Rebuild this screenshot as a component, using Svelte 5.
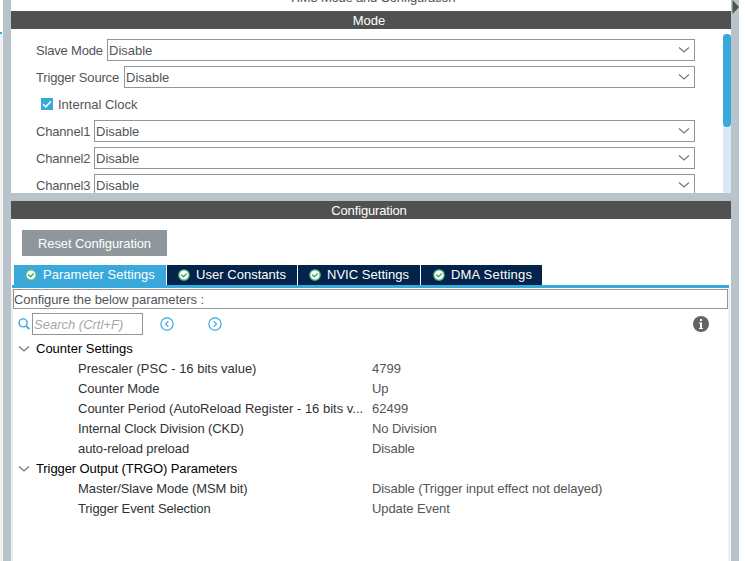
<script>
  const modes = [
    { label: 'Slave Mode', labelWidth: 71, value: 'Disable' },
    { label: 'Trigger Source', labelWidth: 88, value: 'Disable' },
    { label: 'Internal Clock', check: true },
    { label: 'Channel1', labelWidth: 58, value: 'Disable' },
    { label: 'Channel2', labelWidth: 58, value: 'Disable' },
    { label: 'Channel3', labelWidth: 58, value: 'Disable' },
  ];
  const tabs = [
    { name: 'Parameter Settings', width: 152 },
    { name: 'User Constants', width: 130 },
    { name: 'NVIC Settings', width: 122 },
    { name: 'DMA Settings', width: 121, wide: true },
  ];
  const groups = [
    {
      name: 'Counter Settings',
      rows: [
        { name: 'Prescaler (PSC - 16 bits value)', value: '4799' },
        { name: 'Counter Mode', value: 'Up', tight: true },
        { name: 'Counter Period (AutoReload Register - 16 bits v...', value: '62499' },
        { name: 'Internal Clock Division (CKD)', value: 'No Division', tight: true },
        { name: 'auto-reload preload', value: 'Disable', tight: true },
      ],
    },
    {
      name: 'Trigger Output (TRGO) Parameters',
      tight: true,
      rows: [
        { name: 'Master/Slave Mode (MSM bit)', value: 'Disable (Trigger input effect not delayed)', tight: true },
        { name: 'Trigger Event Selection', value: 'Update Event', tight: true },
      ],
    },
  ];
</script>

{#snippet chevron()}
  <svg class="chevron" width="12" height="8" viewBox="0 0 12 8"><path d="M1 1.5 L6 6 L11 1.5" /></svg>
{/snippet}

<div class="window">
  <div class="outer-left"><i></i></div>
  <div class="rail"></div>
  <main>
    <section class="mode">
      <div class="title"><span>TIM3 Mode and Configuration</span></div>
      <h2 class="mode-title">Mode</h2>
      <div class="mode-body">
        <div class="fields">
          {#each modes as m}
            <div class="field">
              {#if m.check}
                <svg class="check" width="12" height="12" viewBox="0 0 12 12">
                  <rect width="12" height="12" fill="#39a9dc" />
                  <path d="M2.2 6.2 L4.8 8.8 L9.8 3.4" fill="none" stroke="#fff" stroke-width="1.5" />
                </svg>
                <span class="text">{m.label}</span>
              {:else}
                <span class="label text" style="width: {m.labelWidth}px">{m.label}</span>
                <div class="select"><span class="text">{m.value}</span>{@render chevron()}</div>
              {/if}
            </div>
          {/each}
        </div>
        <div class="scroll"><div class="thumb"></div></div>
      </div>
    </section>
    <div class="splitter"></div>
    <section class="config">
      <h2>Configuration</h2>
      <button class="reset">Reset Configuration</button>
      <nav>
        {#each tabs as t, i}
          <div class="tab" class:active={i === 0} class:wide={t.wide} style="width: {t.width}px">
            <svg width="12" height="12" viewBox="0 0 12 12">
              <circle cx="6" cy="6" r="5.2" fill="#fff" stroke="#4fb87c" stroke-width="1.3" />
              <path d="M3.2 5.6 L5.4 7.8 L8.8 4.4" fill="none" stroke="#3da866" stroke-width="1.4" />
            </svg>
            <span>{t.name}</span>
          </div>
        {/each}
      </nav>
      <div class="line"></div>
      <div class="panel">
        <div class="hint">Configure the below parameters :</div>
        <div class="tools">
          <svg class="mag" width="12" height="12" viewBox="0 0 12 12">
            <circle cx="5.1" cy="4.9" r="4" /><path d="M8 7.8 L11.4 11.2" stroke-width="1.8" />
          </svg>
          <div class="search">Search (Crtl+F)</div>
          <svg class="nav" width="14" height="14" viewBox="0 0 14 14"><circle cx="7" cy="7" r="6.1" /><path d="M8.4 4.2 L5.6 7 L8.4 9.8" /></svg>
          <svg class="nav next" width="14" height="14" viewBox="0 0 14 14"><circle cx="7" cy="7" r="6.1" /><path d="M5.6 4.2 L8.4 7 L5.6 9.8" /></svg>
          <svg class="info" width="16" height="16" viewBox="0 0 16 16">
            <circle cx="8" cy="8" r="8" fill="#646464" />
            <path d="M7 3h2v2H7z M6 6.4h3V12h1v1H6v-1h1V7.4H6z" fill="#fff" />
          </svg>
        </div>
        <div class="tree">
          {#each groups as g}
            <div class="group" class:tight={g.tight}>{@render chevron()}<span>{g.name}</span></div>
            {#each g.rows as r}
              <div class="row" class:tight={r.tight}><span class="name">{r.name}</span><span class="value">{r.value}</span></div>
            {/each}
          {/each}
        </div>
      </div>
    </section>
  </main>
  <div class="rail right">
    <svg width="7" height="14" viewBox="0 0 7 14"><path d="M0.5 0 L7 7 L0.5 14z" fill="#4f5250" /></svg>
  </div>
</div>

<style>
  :global(body) { margin: 0; background: #fff; overflow: hidden; }
  .window {
    display: flex; width: 745px; height: 561px; overflow: hidden; background: #fff;
    font: 13px/20px "Liberation Sans", Arial, sans-serif; color: #535557; white-space: nowrap;
  }
  svg { display: block; flex: none; }
  .outer-left { width: 3px; padding-top: 32px; display: flex; flex-direction: column; background: linear-gradient(#fff 34px, #f0f1f1 34px); box-sizing: border-box; }
  .outer-left i { width: 2px; height: 2px; background: #39a9dc; }
  .rail { width: 8px; background: #b8c4ca; flex: none; }
  .right svg { margin-left: 1px; }
  main { width: 720px; display: flex; flex-direction: column; }
  .mode { height: 193px; overflow: hidden; display: flex; flex-direction: column; flex: none; }
  .title { height: 11px; display: flex; align-items: flex-end; justify-content: center; flex: none; overflow: hidden; padding-left: 2px; }
  .title span { line-height: 20px; margin-bottom: 3px; letter-spacing: -0.2px; }
  h2 { margin: 0; height: 18px; box-sizing: border-box; flex: none; background: #4f5250; color: #fff; font: 13px/18px "Liberation Sans", Arial, sans-serif; text-align: center; letter-spacing: -0.15px; padding: 1px 4px 0 0; }
  .mode-title { letter-spacing: 0; }
  .mode-body { display: flex; flex: 1; min-height: 0; justify-content: space-between; }
  .fields { width: 659px; margin-left: 25px; padding-top: 10px; display: flex; flex-direction: column; gap: 5px; }
  .field { height: 22px; display: flex; align-items: center; flex: none; }
  .text { padding-top: 2px; }
  .check { margin: 0 5px; }
  .label { flex: none; letter-spacing: -0.18px; }
  .select { flex: 1; box-sizing: border-box; height: 22px; border: 1px solid #8e959b; display: flex; align-items: center; justify-content: space-between; padding: 0 4px 0 1px; }
  .chevron path { fill: none; stroke: #737577; stroke-width: 1.1; }
  .scroll { width: 8px; margin-top: 5px; background: #dae8f5; }
  .thumb { height: 93px; border-radius: 4px; background: #39a9dc; }
  .splitter { height: 8px; background: #b8c4ca; flex: none; }
  .config { flex: 1; display: flex; flex-direction: column; }
  .reset { width: 145px; height: 26px; margin: 11px 0 9px 11px; padding: 2px 0 0; border: 0; background: #8f979d; color: #fff; font: inherit; letter-spacing: -0.1px; }
  nav { display: flex; gap: 1px; margin-left: 3px; height: 20px; }
  .tab { display: flex; align-items: center; gap: 6px; padding-left: 11px; padding-bottom: 1px; box-sizing: border-box; background: #03234b; color: #fff; letter-spacing: 0.03px; }
  .wide { letter-spacing: 0.2px; padding-left: 12px; }
  .tab.active { background: #39a9dc; }
  .line { height: 3px; margin: 0 2px 0 1px; background: #39a9dc; flex: none; }
  .panel { flex: 1; border-left: 2px solid #f0f1f1; border-right: 3px solid #f0f1f1; padding-top: 1px; }
  .hint { height: 20px; box-sizing: border-box; border: 1px solid #8e959b; line-height: 19px; letter-spacing: -0.07px; }
  .tools { height: 30px; display: flex; align-items: center; padding: 0 19px 0 5px; }
  .mag { fill: none; stroke: #39a9dc; stroke-width: 1.4; }
  .search { width: 111px; height: 22px; box-sizing: border-box; margin: 0 17px 0 2px; border: 1px solid #8e959b; padding-left: 1px; font-style: italic; color: #a6a8aa; line-height: 21px; }
  .nav { fill: none; stroke: #39a9dc; stroke-width: 1.2; }
  .next { margin-left: 34px; }
  .info { margin-left: auto; }
  .group, .row { height: 20px; display: flex; align-items: center; }
  .group { color: #000; padding-left: 5px; gap: 6px; }
  .row { padding-left: 65px; }
  .tight { letter-spacing: -0.09px; }
  .name { width: 294px; color: #303234; }
</style>
